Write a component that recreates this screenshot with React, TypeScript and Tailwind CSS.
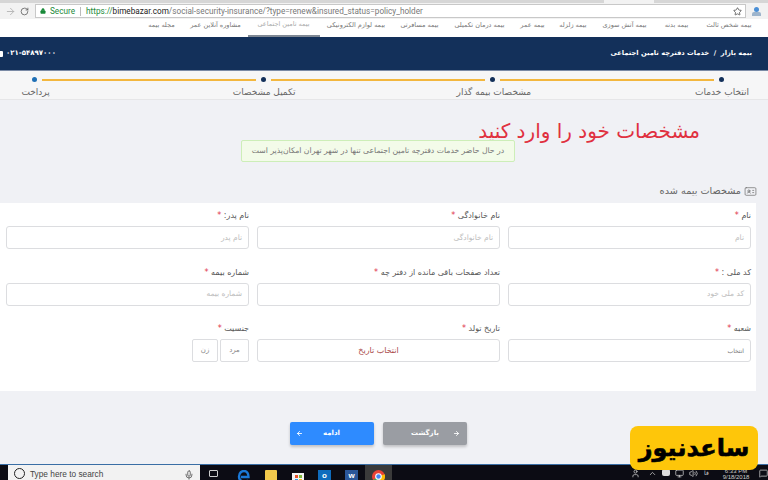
import React from 'react';
import { ArrowLeft, ArrowRight, RotateCw, Star, Lock, Mic, ChevronUp, IdCard, MessageSquare, Volume2, Monitor, User } from 'lucide-react';

const navItems = [
  { label: 'بیمه شخص ثالث', w: 'w-[48px]' },
  { label: 'بیمه بدنه', w: 'w-[28px]' },
  { label: 'بیمه آتش سوزی', w: 'w-[47px]' },
  { label: 'بیمه زلزله', w: 'w-[27px]' },
  { label: 'بیمه عمر', w: 'w-[25px]' },
  { label: 'بیمه درمان تکمیلی', w: 'w-[52px]' },
  { label: 'بیمه مسافرتی', w: 'w-[39px]' },
  { label: 'بیمه لوازم الکترونیکی', w: 'w-[59px]' },
  { label: 'بیمه تامین اجتماعی', w: 'w-[57px]', active: true },
  { label: 'مشاوره آنلاین عمر', w: 'w-[50px]' },
  { label: 'مجله بیمه', w: 'w-[29px]' },
];

const Label = ({ text }: { text: string }) => (
  <label className="block h-[14px] text-[8px] leading-[14px] text-[#555]">
    {text} <span className="text-[#e0344b]">*</span>
  </label>
);

const Field = ({ label, placeholder }: { label: string; placeholder?: string }) => (
  <div className="w-[243px]">
    <Label text={label} />
    <div className="mt-[3px] flex h-[23px] items-center rounded-[3px] border border-[#dcdde0] bg-white px-[6px] text-[7.5px] text-[#bdbdbd]">
      {placeholder}
    </div>
  </div>
);

const StepDot = ({ color = 'bg-[#13305a]' }: { color?: string }) => (
  <span className={`h-[5px] w-[5px] shrink-0 rounded-full ${color}`} />
);

const TaskIcon = ({ children, active }: { children: React.ReactNode; active?: boolean }) => (
  <div className={`flex h-[16px] w-[27px] shrink-0 items-start justify-center pt-[5px] ${active ? 'bg-[#3a3a3a]' : ''}`}>{children}</div>
);

export default function App() {
  return (
    <div className="relative flex h-[480px] w-[768px] flex-col overflow-hidden bg-[#f0f1f5] font-['DejaVu_Sans',sans-serif]">
      {/* chrome toolbar */}
      <div className="h-[3px] shrink-0 bg-[#d6d6d6] pl-[604px]">
        <div className="h-full w-[50px] bg-[#f2f2f2]" />
      </div>
      <div className="flex h-[16px] shrink-0 items-center bg-[#f2f2f2] pl-[5px] pr-[7px]">
        <ArrowRight size={11} className="text-[#b5b5b5]" />
        <RotateCw size={9} className="ml-[4px] text-[#555]" />
        <div className="ml-[6px] flex h-[14px] flex-1 items-center border border-[#c8c8c8] bg-white pl-[4px] pr-[3px] font-['Roboto',sans-serif] text-[8.2px] text-[#777]">
          <Lock size={6} className="text-[#1a8a3a]" fill="#1a8a3a" />
          <span className="ml-[4px] text-[#1a8a3a]">Secure</span>
          <span className="mx-[5px] h-[9px] w-px bg-[#bbb]" />
          <span className="whitespace-nowrap">
            <span className="text-[#1a8a3a]">https://</span>
            <span className="text-[#222]">bimebazar.com</span>/social-security-insurance/?type=renew&amp;insured_status=policy_holder
          </span>
          <Star size={9} className="ml-auto text-[#444]" />
        </div>
        <div className="ml-[6px] flex w-[9px] flex-col items-center">
          <span className="h-[5px] w-[5px] rounded-full bg-[#4a8fd6]" />
          <span className="h-[4px] w-[9px] rounded-t-[2px] bg-[#9db4cc]" />
        </div>
      </div>

      {/* nav */}
      <div dir="rtl" className="flex h-[18px] shrink-0 items-start gap-[14.5px] overflow-hidden bg-white pr-[15px] text-[6.5px] leading-[9px] text-[#777]">
        {navItems.map((item) => (
          <div key={item.label} className={`relative flex h-[18px] justify-center whitespace-nowrap ${item.w} ${item.active ? 'text-[#aaa]' : ''}`}>
            {item.active ? (
              <>
                <span className="mt-[1px]">{item.label}</span>
                <span className="absolute -left-[7px] -right-[8px] bottom-0 h-[2px] bg-[#7f8894]" />
              </>
            ) : (
              <span className="mt-[2px]">{item.label}</span>
            )}
          </div>
        ))}
      </div>

      {/* header */}
      <div dir="rtl" className="flex h-[34px] shrink-0 items-center justify-between border-b border-[#7a8aa5] bg-[#13305a] pr-[16px] text-white">
        <span className="text-[6.7px] font-bold">بیمه بازار &nbsp;/&nbsp; خدمات دفترچه تامین اجتماعی</span>
        <span dir="ltr" className="flex items-center gap-[3px] text-[7px] font-bold">
          <span className="h-[6px] w-[3px] rounded-r-[1px] bg-white" />
          ۰۲۱-۵۴۸۹۷۰۰۰
        </span>
      </div>

      {/* steps */}
      <div dir="rtl" className="flex h-[29px] shrink-0 flex-col border-b border-[#e6e6e8] bg-[#f6f6f7] pl-[32px] pr-[44px] pt-[6px]">
        <div className="flex items-center gap-[5px]">
          <StepDot />
          <span className="h-[2px] flex-1 bg-[#f3b73f]" />
          <StepDot />
          <span className="h-[2px] flex-1 bg-[#f3b73f]" />
          <StepDot />
          <span className="h-[2px] flex-1 bg-[#f3b73f]" />
          <StepDot color="bg-[#1f6fb5]" />
        </div>
        <div className="-mr-[25px] mt-[3px] flex whitespace-nowrap text-[9px] leading-[14px] text-[#666]">
          <span>انتخاب خدمات</span>
          <span className="mr-[164px]">مشخصات بیمه گذار</span>
          <span className="mr-[161px]">تکمیل مشخصات</span>
          <span className="mr-[183px]">پرداخت</span>
        </div>
      </div>

      {/* title + alert */}
      <div dir="rtl" className="relative h-[103px] shrink-0">
        <h1 className="mr-[68px] mt-[17px] text-[20px] leading-[28px] text-[#e0303f]">مشخصات خود را وارد کنید</h1>
        <div className="absolute left-[241px] top-[40px] flex h-[22px] w-[274px] items-center justify-center rounded-[2px] border border-[#cdeeb8] bg-[#f3fbe9] text-[7.7px] text-[#777]">
          در حال حاضر خدمات دفترچه تامین اجتماعی تنها در شهر تهران امکان‌پذیر است
        </div>
        <div className="absolute right-[11px] top-[84px] flex items-center gap-[3px] text-[9.7px] text-[#666]">
          <IdCard size={13} strokeWidth={1.25} />
          مشخصات بیمه شده
        </div>
      </div>

      {/* form card */}
      <div dir="rtl" className="mr-[12px] flex h-[188px] w-[756px] shrink-0 flex-col gap-[16.5px] bg-white pl-[6px] pr-[5px] pt-[6px]">
        <div className="flex gap-[8px]">
          <Field label="نام" placeholder="نام" />
          <Field label="نام خانوادگی" placeholder="نام خانوادگی" />
          <Field label="نام پدر:" placeholder="نام پدر" />
        </div>
        <div className="flex gap-[8px]">
          <Field label="کد ملی :" placeholder="کد ملی خود" />
          <Field label="تعداد صفحات باقی مانده از دفتر چه" />
          <Field label="شماره بیمه" placeholder="شماره بیمه" />
        </div>
        <div className="flex gap-[8px]">
          <div className="w-[243px]">
            <Label text="شعبه" />
            <div className="mt-[3px] flex h-[23px] items-center rounded-[3px] border border-[#dcdde0] px-[6px] text-[6px] text-[#777]">انتخاب</div>
          </div>
          <div className="w-[243px]">
            <Label text="تاریخ تولد" />
            <div className="mt-[3px] flex h-[23px] items-center justify-center rounded-[3px] border border-[#dcdde0] text-[8px] text-[#a94a4a]">انتخاب تاریخ</div>
          </div>
          <div className="w-[243px]">
            <Label text="جنسیت" />
            <div className="mt-[3px] flex gap-[2px] text-[7px] text-[#888]">
              <div className="flex h-[23px] w-[29px] items-center justify-center rounded-[2px] border border-[#dcdde0]">مرد</div>
              <div className="flex h-[23px] w-[26px] items-center justify-center rounded-[2px] border border-[#dcdde0]">زن</div>
            </div>
          </div>
        </div>
      </div>

      {/* buttons */}
      <div className="flex h-[73px] shrink-0 items-start gap-[9px] pl-[290px] pt-[31px] text-[7px] font-bold text-white">
        <button className="flex h-[23px] w-[84px] items-center justify-between rounded-[2px] bg-[#2e8bff] pl-[6px] pr-[34px] shadow-[0_2px_3px_rgba(0,0,0,0.2)]">
          <ArrowLeft size={7} strokeWidth={3} />
          <span>ادامه</span>
        </button>
        <button className="flex h-[23px] w-[84px] items-center justify-between rounded-[2px] bg-[#9a9da3] pl-[28px] pr-[7px] shadow-[0_2px_3px_rgba(0,0,0,0.2)]">
          <span>بازگشت</span>
          <ArrowRight size={7} strokeWidth={3} />
        </button>
      </div>

      {/* taskbar, cut off at the bottom like the screenshot */}
      <div className="flex h-[16px] flex-1 items-start overflow-hidden border-t border-[#3a6ea5] bg-[#0c0c14] pl-[8px] font-['Liberation_Sans',sans-serif]">
        <div className="flex h-full w-[192px] shrink-0 items-start bg-[#f2f2f2] px-[6px] pt-[3px] text-[8.3px] leading-[13px] text-[#444]">
          <span className="h-[11px] w-[11px] shrink-0 rounded-full border-[1.5px] border-[#222]" />
          <span className="ml-[5px]">Type here to search</span>
          <Mic size={10} className="ml-auto mt-[2px] text-[#555]" />
        </div>
        <TaskIcon>
          <span className="h-[7px] w-[9px] rounded-[1px] border border-[#ccc]" />
        </TaskIcon>
        <div className="ml-[3px] flex shrink-0 items-start">
          <TaskIcon>
            <svg width="13" height="13" viewBox="0 0 13 13" fill="none">
              <path d="M11 10.5 C8 12.5 2 12 2 6.5 C2 2.5 5 1 7 1 C10 1 11.5 3.5 11.5 7 L4 7" stroke="#1a78d6" strokeWidth="2.4" />
            </svg>
          </TaskIcon>
          <TaskIcon>
            <span className="h-[12px] w-[12px] rounded-[1px] bg-[#f2c94c]" />
          </TaskIcon>
          <TaskIcon>
            <svg width="12" height="13" viewBox="0 0 12 13">
              <rect y="3" width="12" height="10" fill="#f4f4f4" />
              <rect x="3" y="5" width="3" height="3" fill="#e8532b" />
              <rect x="7" y="5" width="3" height="3" fill="#7db93c" />
              <rect x="3" y="9" width="3" height="3" fill="#2b9be8" />
              <rect x="7" y="9" width="3" height="3" fill="#f5b921" />
            </svg>
          </TaskIcon>
          <TaskIcon>
            <span className="flex h-[11px] w-[13px] items-center justify-center bg-[#0f6cbd] text-[8px] leading-[8px] font-bold text-white">o</span>
          </TaskIcon>
          <TaskIcon>
            <span className="flex h-[11px] w-[13px] items-center justify-center bg-[#2b579a] text-[8px] leading-[8px] font-bold text-white">w</span>
          </TaskIcon>
          <TaskIcon active>
            <svg width="13" height="13" viewBox="0 0 12 12">
              <circle cx="6" cy="6" r="6" fill="#ea4335" />
              <path d="M6 6 L11.2 9 A6 6 0 0 1 1 9.3 Z" fill="#34a853" />
              <path d="M6 6 L11.7 4 A6 6 0 0 1 6 12 Z" fill="#fbbc05" />
              <circle cx="6" cy="6" r="2.6" fill="#4285f4" stroke="white" />
            </svg>
          </TaskIcon>
        </div>
        <div className="ml-[239px] flex shrink-0 items-start pt-[4px] text-[#ccc]">
          <User size={9} />
          <ChevronUp size={9} className="ml-[8px]" />
          <span className="ml-[5px] h-[7px] w-[8px] rounded-[2px] bg-[#ddd]" />
          <Monitor size={9} className="ml-[5px]" />
          <Volume2 size={9} className="ml-[5px]" />
          <span className="ml-[6px] text-[6px] leading-[8px]">فا</span>
          <span className="-mt-[1px] ml-[12px] w-[30px] text-center text-[6px] leading-[6px]">
            6:33 PM
            <br />
            9/18/2018
          </span>
          <MessageSquare size={9} className="ml-[8px]" />
        </div>
      </div>

      {/* watermark */}
      <div className="absolute left-[630px] top-[426px] flex h-[44px] w-[128px] items-center justify-center rounded-[8px] bg-[#fec60a] text-[24px] font-bold leading-none text-black [-webkit-text-stroke:0.6px_black]">
        ساعدنیوز
      </div>
    </div>
  );
}
